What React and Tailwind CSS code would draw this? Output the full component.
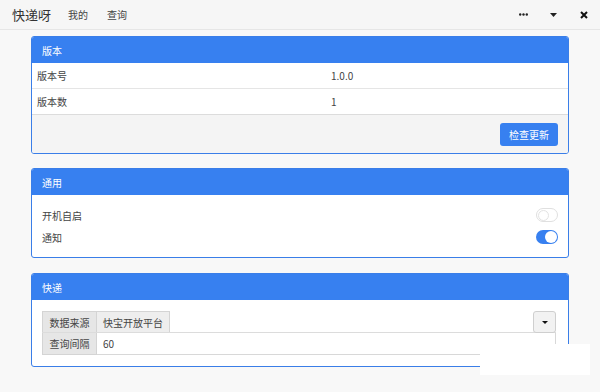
import React, { useState } from "react";

const font = { fontFamily: '"Noto Sans CJK SC", "Liberation Sans", sans-serif' };

function Card({ title, children }) {
  return (
    <div className="border border-[#3a7ee8] rounded-[3px] bg-white overflow-hidden">
      <div className="h-[26px] bg-[#3780f0] text-white text-[10px] flex items-center pl-[10px]">
        {title}
      </div>
      {children}
    </div>
  );
}

function Toggle({ on, onClick }) {
  return (
    <button
      onClick={onClick}
      className={
        on
          ? "w-[22px] h-[14px] rounded-full bg-[#3780f0] flex items-center justify-end p-[1px]"
          : "w-[22px] h-[14px] rounded-full bg-white border border-[#e0e0e0] flex items-center justify-start p-[1px]"
      }
    >
      <span
        className={
          on
            ? "w-[12px] h-[12px] rounded-full bg-white"
            : "w-[11px] h-[11px] rounded-full bg-white border border-[#e3e3e3]"
        }
      />
    </button>
  );
}

export default function App() {
  const [autoStart, setAutoStart] = useState(false);
  const [notify, setNotify] = useState(true);
  const [interval, setInterval] = useState("60");

  return (
    <div className="w-[600px] h-[392px] bg-[#f8f8f8] text-[#444] relative overflow-hidden" style={font}>
      {/* title bar */}
      <div className="h-[30px] flex items-center border-b border-[#e6e6e6] bg-[#f6f6f6]">
        <div className="pl-[12px] text-[13px] text-[#333]">快递呀</div>
        <div className="ml-[17px] text-[10px]">我的</div>
        <div className="ml-[19px] text-[10px]">查询</div>
        <div className="flex-1" />
        <div className="w-[30px] flex justify-center">
          <svg width="9" height="3" viewBox="0 0 9 3">
            <circle cx="1.2" cy="1.5" r="1.2" fill="#222" />
            <circle cx="4.5" cy="1.5" r="1.2" fill="#222" />
            <circle cx="7.8" cy="1.5" r="1.2" fill="#222" />
          </svg>
        </div>
        <div className="w-[30px] flex justify-center">
          <svg width="7" height="4" viewBox="0 0 7 4">
            <path d="M0 0h7L3.5 4z" fill="#222" />
          </svg>
        </div>
        <div className="w-[32px] flex justify-center">
          <svg width="8" height="8" viewBox="0 0 8 8">
            <path d="M1 1l6 6M7 1L1 7" stroke="#111" strokeWidth="2" />
          </svg>
        </div>
      </div>

      <div className="px-[31px] pt-[6px] w-[600px] flex flex-col gap-[14px]">
        <div className="w-[538px]">
          <Card title="版本">
            <div className="h-[26px] flex items-center text-[10px] border-b border-[#e5e5e5]">
              <div className="w-[299px] pl-[5px]">版本号</div>
              <div>1.0.0</div>
            </div>
            <div className="h-[26px] flex items-center text-[10px] border-b border-[#dcdcdc]">
              <div className="w-[299px] pl-[5px]">版本数</div>
              <div>1</div>
            </div>
            <div className="h-[38px] bg-[#f4f4f4] flex items-center justify-end pr-[10px]">
              <button className="h-[23px] px-[9px] rounded-[3px] bg-[#3780f0] text-white text-[10px]">
                检查更新
              </button>
            </div>
          </Card>
        </div>

        <div className="w-[538px]">
          <Card title="通用">
            <div className="py-[9px] px-[10px] text-[10px]">
              <div className="h-[22px] flex items-center justify-between">
                <span>开机自启</span>
                <Toggle on={autoStart} onClick={() => setAutoStart(!autoStart)} />
              </div>
              <div className="h-[22px] flex items-center justify-between">
                <span>通知</span>
                <Toggle on={notify} onClick={() => setNotify(!notify)} />
              </div>
            </div>
          </Card>
        </div>

        <div className="w-[538px] mt-[1px]">
          <Card title="快递">
            <div className="pt-[11px] pb-[11px] pl-[10px] pr-[12px] text-[10px]">
              <div className="flex h-[22px] border-b border-[#dcdcdc]">
                <div className="w-[55px] bg-[#e6e6e6] border border-[#d4d4d4] border-b-0 flex items-center justify-center">
                  数据来源
                </div>
                <div className="w-[73px] bg-[#eeeeee] border-t border-r border-[#d4d4d4] flex items-center justify-center">
                  快宝开放平台
                </div>
                <div className="flex-1" />
                <div className="w-[23px] h-[22px] bg-[#f2f2f2] border border-[#cfcfcf] rounded-[3px] flex items-center justify-center">
                  <svg width="6" height="3" viewBox="0 0 6 3">
                    <path d="M0 0h6L3 3z" fill="#111" />
                  </svg>
                </div>
              </div>
              <div className="flex h-[22px]">
                <div className="w-[55px] bg-[#e6e6e6] border border-[#d4d4d4] border-t-0 flex items-center justify-center">
                  查询间隔
                </div>
                <input
                  value={interval}
                  onChange={(e) => setInterval(e.target.value)}
                  className="flex-1 min-w-0 pl-[6px] bg-white border border-l-0 border-t-0 border-[#d8d8d8] outline-none text-[10px]"
                />
              </div>
            </div>
          </Card>
        </div>
      </div>

      {/* white patch over the bottom right */}
      <div className="absolute left-[480px] top-[344px] w-[110px] h-[31px] bg-white" />
    </div>
  );
}
